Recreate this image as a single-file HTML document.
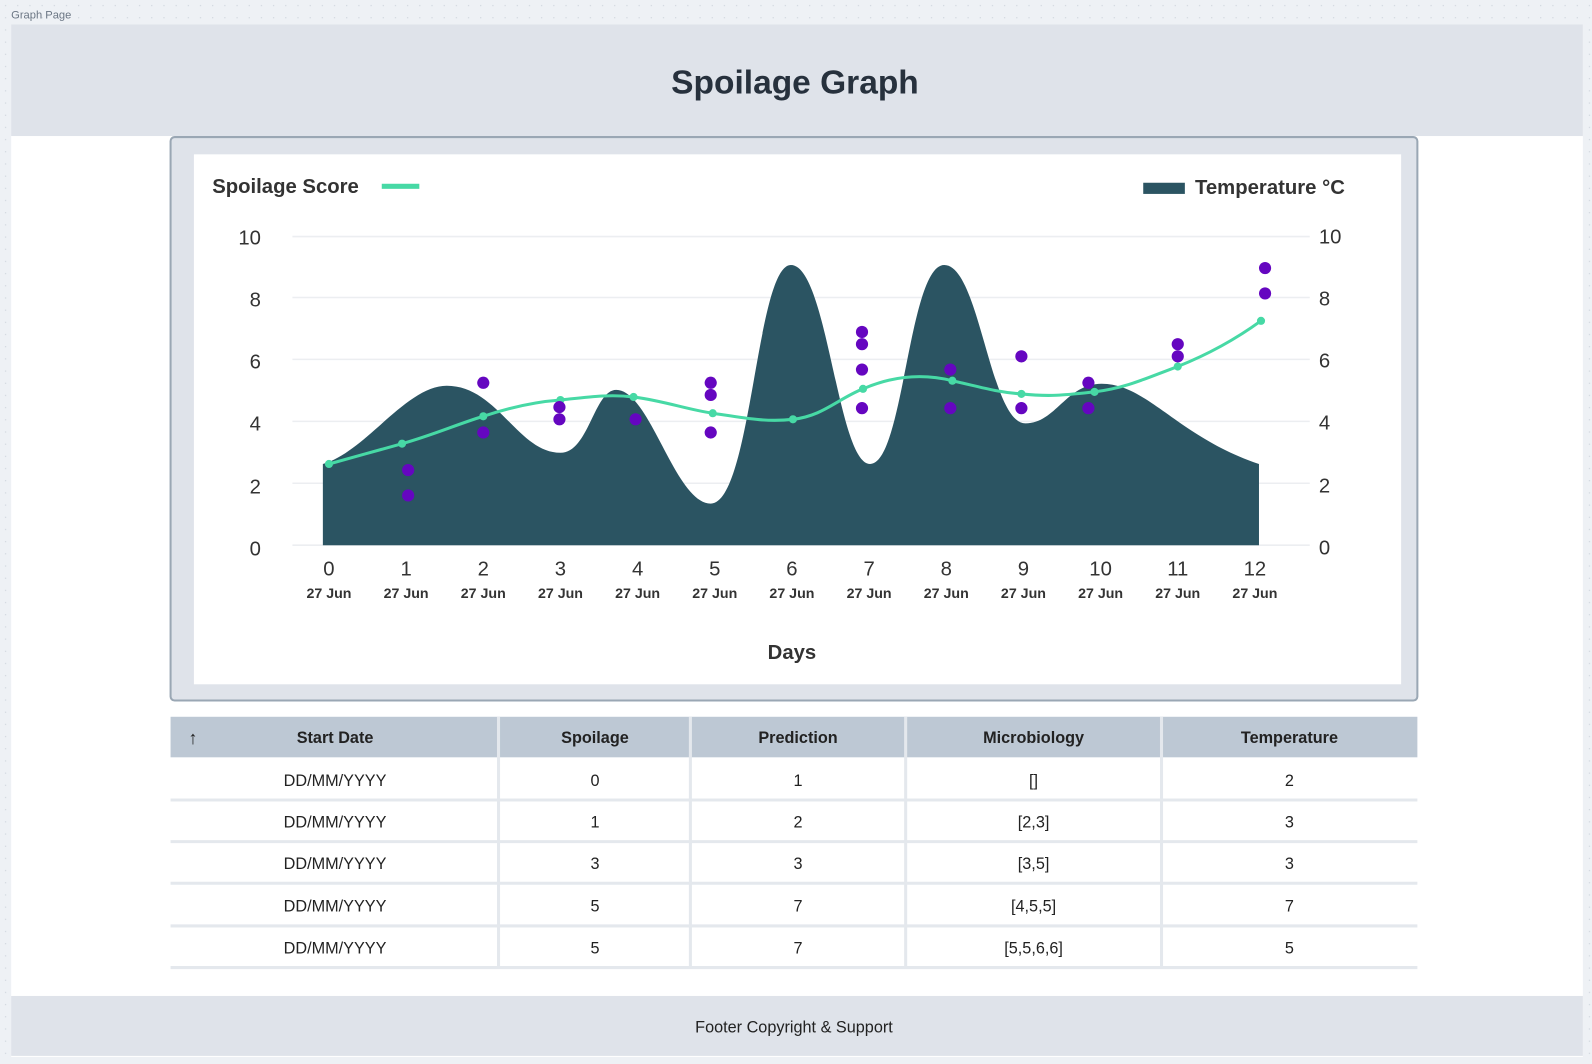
<!DOCTYPE html>
<html><head><meta charset="utf-8"><style>
html,body{margin:0;padding:0;width:1592px;height:1064px;overflow:hidden;background:#eef1f5}
svg{display:block}
text{font-family:"Liberation Sans",sans-serif}
</style></head><body>
<svg width="1592" height="1064" viewBox="0 0 1568 1048" preserveAspectRatio="none">
<defs><pattern id="dots" width="12" height="12" patternUnits="userSpaceOnUse"><rect x="5" y="5" width="1" height="1" fill="#c4cbd4"/></pattern></defs>
<rect width="1568" height="1048" fill="#eef1f5"/>
<rect width="1568" height="1048" fill="url(#dots)"/>
<text x="11" y="18" font-size="11" fill="#6b7684">Graph Page</text>
<rect x="11" y="24" width="1548" height="1017" fill="#fff"/>
<rect x="11" y="24" width="1548" height="110" fill="#dfe3ea"/>
<text x="783" y="92" font-size="33" font-weight="bold" fill="#27313d" text-anchor="middle">Spoilage Graph</text>
<!-- panel -->
<rect x="168" y="135" width="1228" height="555" rx="4" fill="#dfe3ea" stroke="#9aa7b4" stroke-width="2"/>
<rect x="191" y="152" width="1189" height="522" fill="#fff"/>
<!-- legend -->
<text x="209" y="190" font-size="20" font-weight="bold" fill="#333">Spoilage Score</text>
<rect x="376" y="181" width="37" height="5" fill="#47d9a5"/>
<rect x="1126" y="180" width="41" height="11" fill="#2b5462"/>
<text x="1177" y="191" font-size="20" font-weight="bold" fill="#333">Temperature °C</text>
<!-- grid -->
<g stroke="#eceef1" stroke-width="1.5">
<line x1="288" y1="233" x2="1290" y2="233"/><line x1="288" y1="293" x2="1290" y2="293"/><line x1="288" y1="354" x2="1290" y2="354"/><line x1="288" y1="415" x2="1290" y2="415"/><line x1="288" y1="476" x2="1290" y2="476"/><line x1="288" y1="537" x2="1290" y2="537"/>
</g>
<g font-size="20" fill="#333">
<g text-anchor="end"><text x="257" y="241">10</text><text x="257" y="302">8</text><text x="257" y="363">6</text><text x="257" y="424">4</text><text x="257" y="486">2</text><text x="257" y="547">0</text></g>
<text x="1299" y="240">10</text><text x="1299" y="301">8</text><text x="1299" y="362">6</text><text x="1299" y="423">4</text><text x="1299" y="485">2</text><text x="1299" y="546">0</text>
</g>
<!-- area -->
<path fill="#2b5462" d="M318,537 L318,457 C360,445 400,380 440,380 C490,380 510,446 552,446 C580,446 585,384 607,384 C640,384 665,496 700,496 C740,496 745,261 779,261 C815,261 825,457 857,457 C890,457 895,261 930,261 C965,261 975,417 1010,417 C1040,417 1050,378 1085,378 C1130,378 1160,430 1240,457 L1240,537 Z"/>
<!-- green line -->
<path fill="none" stroke="#47d9a5" stroke-width="3" d="M324,457 C350,450 370,444 396,437 C425,429 450,418 476,410 C500,402 525,396 552,394 C580,391 600,388 624,391 C655,395 675,403 702,407 C735,412 755,416 781,413 C810,410 825,393 850,383 C880,370 910,368 938,375 C965,381 980,386 1006,388 C1035,391 1050,389 1078,386 C1110,382 1130,372 1160,361 C1195,347 1220,332 1242,316"/>
<g fill="#47d9a5">
<circle cx="324" cy="457" r="4"/><circle cx="396" cy="437" r="4"/><circle cx="476" cy="410" r="4"/><circle cx="552" cy="394" r="4"/><circle cx="624" cy="391" r="4"/><circle cx="702" cy="407" r="4"/><circle cx="781" cy="413" r="4"/><circle cx="850" cy="383" r="4"/><circle cx="938" cy="375" r="4"/><circle cx="1006" cy="388" r="4"/><circle cx="1078" cy="386" r="4"/><circle cx="1160" cy="361" r="4"/><circle cx="1242" cy="316" r="4"/>
</g>
<g fill="#6506c0">
<circle cx="402" cy="463" r="6"/><circle cx="402" cy="488" r="6"/><circle cx="476" cy="377" r="6"/><circle cx="476" cy="426" r="6"/><circle cx="551" cy="401" r="6"/><circle cx="551" cy="413" r="6"/><circle cx="626" cy="413" r="6"/><circle cx="700" cy="377" r="6"/><circle cx="700" cy="389" r="6"/><circle cx="700" cy="426" r="6"/><circle cx="849" cy="327" r="6"/><circle cx="849" cy="339" r="6"/><circle cx="849" cy="364" r="6"/><circle cx="849" cy="402" r="6"/><circle cx="936" cy="364" r="6"/><circle cx="936" cy="402" r="6"/><circle cx="1006" cy="351" r="6"/><circle cx="1006" cy="402" r="6"/><circle cx="1072" cy="377" r="6"/><circle cx="1072" cy="402" r="6"/><circle cx="1160" cy="339" r="6"/><circle cx="1160" cy="351" r="6"/><circle cx="1246" cy="264" r="6"/><circle cx="1246" cy="289" r="6"/>
</g>
<!-- x labels -->
<g text-anchor="middle" fill="#333">
<g font-size="20"><text x="324" y="567">0</text><text x="400" y="567">1</text><text x="476" y="567">2</text><text x="552" y="567">3</text><text x="628" y="567">4</text><text x="704" y="567">5</text><text x="780" y="567">6</text><text x="856" y="567">7</text><text x="932" y="567">8</text><text x="1008" y="567">9</text><text x="1084" y="567">10</text><text x="1160" y="567">11</text><text x="1236" y="567">12</text></g>
<g font-size="14" font-weight="bold"><text x="324" y="589">27 Jun</text><text x="400" y="589">27 Jun</text><text x="476" y="589">27 Jun</text><text x="552" y="589">27 Jun</text><text x="628" y="589">27 Jun</text><text x="704" y="589">27 Jun</text><text x="780" y="589">27 Jun</text><text x="856" y="589">27 Jun</text><text x="932" y="589">27 Jun</text><text x="1008" y="589">27 Jun</text><text x="1084" y="589">27 Jun</text><text x="1160" y="589">27 Jun</text><text x="1236" y="589">27 Jun</text></g>
<text x="780" y="649" font-size="20" font-weight="bold">Days</text>
</g>
<!-- table -->
<rect x="168" y="706" width="1228" height="40" fill="#bdc8d4"/>
<g fill="#f7f8fa"><rect x="168" y="746" width="1228" height="207" fill="#fff"/></g>
<g stroke="#e4e8ed" stroke-width="3">
<line x1="168" y1="788" x2="1396" y2="788"/><line x1="168" y1="829" x2="1396" y2="829"/><line x1="168" y1="870" x2="1396" y2="870"/><line x1="168" y1="912" x2="1396" y2="912"/><line x1="168" y1="953" x2="1396" y2="953"/>
<line x1="491" y1="706" x2="491" y2="953"/><line x1="680" y1="706" x2="680" y2="953"/><line x1="892" y1="706" x2="892" y2="953"/><line x1="1144" y1="706" x2="1144" y2="953"/>
</g>
<text x="190" y="733" font-size="18" font-weight="bold" fill="#222" text-anchor="middle">↑</text>
<g text-anchor="middle" font-size="16" font-weight="bold" fill="#222">
<text x="330" y="732">Start Date</text><text x="586" y="732">Spoilage</text><text x="786" y="732">Prediction</text><text x="1018" y="732">Microbiology</text><text x="1270" y="732">Temperature</text>
</g>
<g text-anchor="middle" font-size="16" fill="#222">
<text x="330" y="774">DD/MM/YYYY</text><text x="586" y="774">0</text><text x="786" y="774">1</text><text x="1018" y="774">[]</text><text x="1270" y="774">2</text>
<text x="330" y="815">DD/MM/YYYY</text><text x="586" y="815">1</text><text x="786" y="815">2</text><text x="1018" y="815">[2,3]</text><text x="1270" y="815">3</text>
<text x="330" y="856">DD/MM/YYYY</text><text x="586" y="856">3</text><text x="786" y="856">3</text><text x="1018" y="856">[3,5]</text><text x="1270" y="856">3</text>
<text x="330" y="898">DD/MM/YYYY</text><text x="586" y="898">5</text><text x="786" y="898">7</text><text x="1018" y="898">[4,5,5]</text><text x="1270" y="898">7</text>
<text x="330" y="939">DD/MM/YYYY</text><text x="586" y="939">5</text><text x="786" y="939">7</text><text x="1018" y="939">[5,5,6,6]</text><text x="1270" y="939">5</text>
</g>
<!-- footer -->
<rect x="11" y="981" width="1548" height="59" fill="#dfe3ea"/>
<text x="782" y="1017" font-size="16" fill="#222" text-anchor="middle">Footer Copyright &amp; Support</text>
</svg>
</body></html>
